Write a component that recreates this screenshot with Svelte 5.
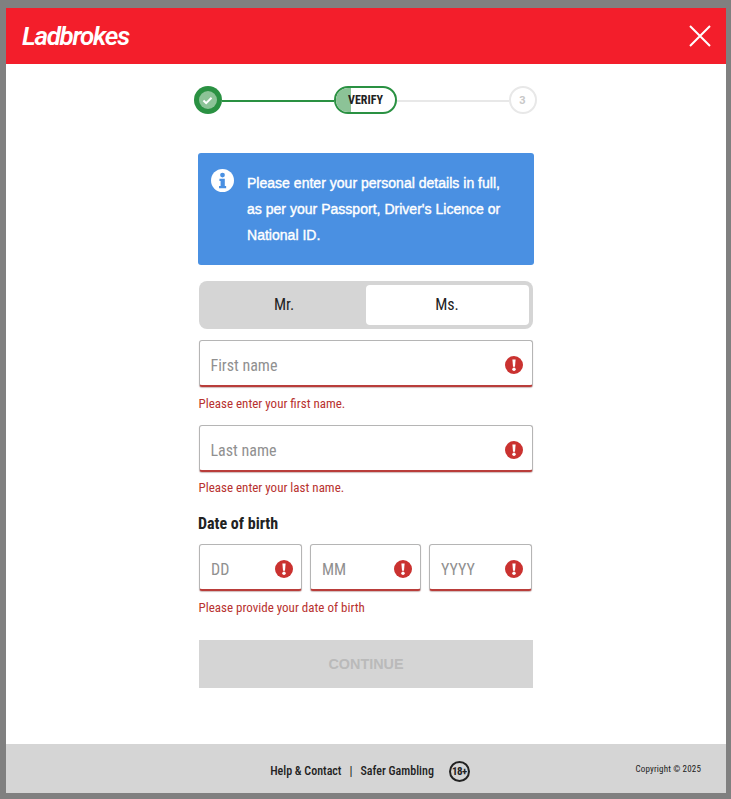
<script>
</script>

{#snippet alert()}
  <svg class="alert" viewBox="0 0 18 18" width="18" height="18" aria-hidden="true">
    <circle cx="9" cy="9" r="9" fill="#ca3230" />
    <path d="M7.4 3.4h3.2l-.6 7.3H8z" fill="#fff" />
    <circle cx="9" cy="13.2" r="1.7" fill="#fff" />
  </svg>
{/snippet}

<div class="page">
  <div class="modal">
    <header class="top">
      <span class="logo">Ladbrokes</span>
      <svg class="close" viewBox="0 0 22 22" width="22" height="22" aria-hidden="true">
        <path d="M1 1l20 20M21 1L1 21" stroke="#fff" stroke-width="2" fill="none" />
      </svg>
    </header>

    <main class="body">
      <div class="stepper">
        <div class="step done">
          <span class="done-in">
            <svg viewBox="0 0 12 10" width="11" height="9" aria-hidden="true">
              <path d="M1.5 5l3 3l6-6" stroke="#fff" stroke-width="2.2" fill="none" />
            </svg>
          </span>
        </div>
        <div class="line green"></div>
        <div class="pill"><span class="fill"></span><span class="pill-t">VERIFY</span></div>
        <div class="line grey"></div>
        <div class="step todo">3</div>
      </div>

      <div class="info">
        <svg class="info-i" viewBox="0 0 24 24" width="23" height="23" aria-hidden="true">
          <circle cx="12" cy="12" r="12" fill="#fff" />
          <circle cx="12" cy="6.3" r="2.5" fill="#4a90e2" />
          <path d="M8.8 10.2h5.6v7.6h1.4v2.4H8.4v-2.4h1.6v-5.2H8.8z" fill="#4a90e2" />
        </svg>
        <p>Please enter your personal details in full,<br />as per your Passport, Driver's Licence or<br />National ID.</p>
      </div>

      <div class="toggle">
        <div class="opt">Mr.</div>
        <div class="opt on">Ms.</div>
      </div>

      <div class="field"><span class="ph">First name</span>{@render alert()}</div>
      <div class="msg m1">Please enter your first name.</div>
      <div class="field f2"><span class="ph">Last name</span>{@render alert()}</div>
      <div class="msg m2">Please enter your last name.</div>

      <div class="dob-label">Date of birth</div>
      <div class="dob">
        <div class="field small dd"><span class="ph">DD</span>{@render alert()}</div>
        <div class="field small mm"><span class="ph">MM</span>{@render alert()}</div>
        <div class="field small yy"><span class="ph">YYYY</span>{@render alert()}</div>
      </div>
      <div class="msg m3">Please provide your date of birth</div>

      <div class="cta">CONTINUE</div>
    </main>

    <footer class="foot">
      <div class="links">
        <span>Help &amp; Contact</span>
        <span class="sep">|</span>
        <span>Safer Gambling</span>
        <span class="age">18+</span>
      </div>
      <span class="copy">Copyright © 2025</span>
    </footer>
  </div>
</div>

<style>
  :global(body) { margin: 0; background: #808080; }
  .page { width: 731px; height: 799px; padding: 8px 5px 6px 6px; box-sizing: border-box; font-family: "Roboto Condensed", Roboto, sans-serif; font-stretch: 75%; color: #222; }
  .modal { height: 785px; background: #fff; display: flex; flex-direction: column; }
  .top { height: 56px; flex: none; background: #f31e2b; display: flex; align-items: center; justify-content: space-between; padding: 0 15px 0 16px; }
  .logo { font: italic 600 26px/1 Roboto, sans-serif; color: #fff; letter-spacing: -1.25px; display: block; }
  .body { flex: 1; display: flex; flex-direction: column; align-items: center; }
  .stepper { width: 343px; margin-top: 22px; margin-left: -2px; height: 28px; display: flex; align-items: center; }
  .step { width: 28px; height: 28px; box-sizing: border-box; border-radius: 50%; flex: none; display: flex; align-items: center; justify-content: center; }
  .done { background: #2a9142; }
  .done-in { width: 18px; height: 18px; border-radius: 50%; background: #8cc397; display: flex; align-items: center; justify-content: center; }
  .todo { border: 2px solid #e8e8e8; color: #c8c8c8; font: 700 11px Roboto, sans-serif; }
  .line { height: 2px; flex: 1; margin-top: 2px; }
  .green { background: #2a9142; }
  .grey { background: #e8e8e8; }
  .pill { width: 63px; height: 28px; box-sizing: border-box; border: 2px solid #2a9142; border-radius: 14px; overflow: hidden; position: relative; flex: none; display: flex; align-items: center; justify-content: center; }
  .fill { position: absolute; left: 0; top: 0; bottom: 0; width: 15px; background: #8cc397; }
  .pill-t { position: relative; font-size: 12px; font-weight: 700; margin-left: 1px; }
  .info { width: 336px; height: 112px; margin-top: 39px; box-sizing: border-box; background: #4a90e2; border-radius: 3px; padding: 16px 20px 0 13px; display: flex; gap: 13px; color: #fff; }
  .info-i { flex: none; }
  .info p { margin: 1px 0 0; white-space: nowrap; font: 400 14px/26px "Liberation Sans", Arial, sans-serif; letter-spacing: 0.02px; -webkit-text-stroke: 0.4px #fff; }
  .toggle { width: 334px; height: 48px; margin-top: 16px; box-sizing: border-box; background: #d5d5d5; border-radius: 8px; padding: 4px; display: flex; }
  .opt { flex: 1; display: flex; align-items: center; justify-content: center; font-size: 16px; border-radius: 4px; padding: 0 1px 2px 0; }
  .on { background: #fff; flex: none; width: 163px; box-sizing: border-box; }
  .field { width: 334px; height: 47px; box-sizing: border-box; border: 1px solid #b5b5b5; border-bottom: 2px solid #b93d3a; border-radius: 3px; box-shadow: 0 1px 1px rgba(120, 60, 60, 0.35); display: flex; align-items: center; justify-content: space-between; padding: 3px 9px 0 10.5px; background: #fff; flex: none; }
  .field:not(.small) { margin-top: 11px; }
  .f2 { margin-top: 14px !important; }
  .ph { font-size: 16px; color: #909090; margin-top: 2px; }
  .msg { width: 335px; color: #b8322f; font-size: 13px; line-height: 15px; }
  .m1 { margin-top: 9px; }
  .m2 { margin-top: 8px; }
  .dob-label { width: 336px; margin-top: 19px; font-size: 16px; font-weight: 700; line-height: 19px; }
  .dob { width: 333px; margin-top: 11px; display: flex; gap: 8px; margin-left: -1px; }
  .small { padding: 3px 8px 0 11px; }
  .dd { width: 103px; }
  .mm { width: 111px; }
  .yy { width: 103px; }
  .m3 { margin-top: 9px; }
  .cta { width: 334px; height: 48px; margin-top: 25px; background: #d5d5d5; color: #bababa; font: 700 14.4px/48px "Liberation Sans", Arial, sans-serif; text-align: center; }
  .foot { height: 49px; flex: none; background: #d5d5d5; position: relative; display: flex; align-items: center; justify-content: center; }
  .links { display: flex; align-items: center; font-size: 12px; font-weight: 500; margin: 5px 0 0 8px; }
  .sep { margin: 0 8px; }
  .age { width: 21px; height: 21px; box-sizing: border-box; border: 2px solid #222; border-radius: 50%; margin-left: 15px; font-size: 11px; font-weight: 700; display: flex; align-items: center; justify-content: center; letter-spacing: -0.6px; }
  .copy { position: absolute; right: 25px; top: 20px; font-size: 9px; letter-spacing: 0.15px; }
</style>
